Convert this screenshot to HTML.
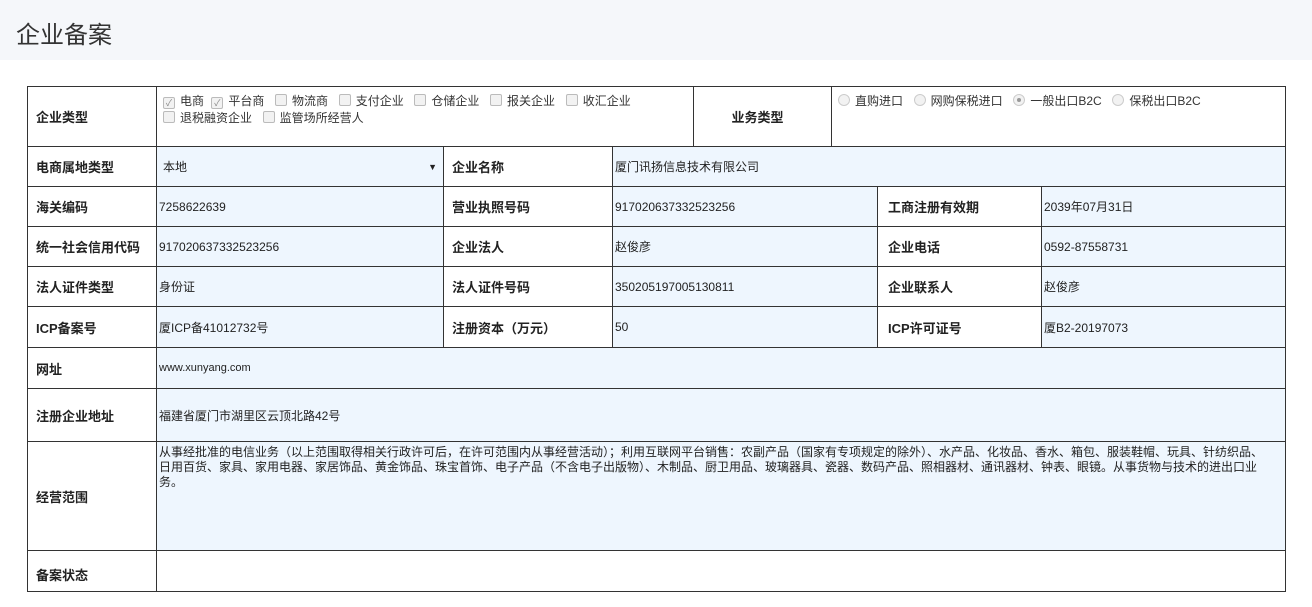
<!DOCTYPE html>
<html><head><meta charset="utf-8"><style>
body{margin:0;width:1312px;height:607px;background:#fff;position:relative;overflow:hidden;font-family:"Liberation Sans","Noto Sans CJK SC",sans-serif;color:#222}
.hd{position:absolute;left:0;top:0;width:1312px;height:60px;background:#f5f7fa}
.hd span{position:absolute;left:16px;top:15px;font-size:24px;color:#333}
.c{position:absolute;box-sizing:border-box;border:1px solid #333;display:flex;align-items:center;font-size:12px;padding-left:2px;overflow:hidden}
.l{font-weight:bold;font-size:13px;padding-left:8px;background:#fff}
.b{background:#eef6fe}
.t{align-items:flex-start}
.cb{display:inline-block;width:10px;height:10px;border:1px solid #bbb;border-radius:2px;background:#f2f2f2;vertical-align:-1px;margin:0 5px 0 4px;position:relative;font-size:9px;line-height:10px;text-align:center;color:#888}
.rd{display:inline-block;width:10px;height:10px;border:1px solid #ccc;border-radius:50%;background:#f2f2f2;vertical-align:-1px;margin:0 5px 0 4px;position:relative}
.rd.on::after{content:"";position:absolute;left:3px;top:3px;width:4px;height:4px;border-radius:50%;background:#999}
</style></head><body>
<div class="hd"><span>企业备案</span></div>

<div class="c l" style="left:27px;top:86px;width:130px;height:61px">企业类型</div>
<div class="c t" style="left:156px;top:86px;width:538px;height:61px;display:block;padding-top:6px;line-height:17px;color:#333"><span class="cb">✓</span>电商 <span class="cb">✓</span>平台商 &nbsp;<span class="cb"></span>物流商 &nbsp;<span class="cb"></span>支付企业 &nbsp;<span class="cb"></span>仓储企业 &nbsp;<span class="cb"></span>报关企业 &nbsp;<span class="cb"></span>收汇企业<br><span class="cb"></span>退税融资企业 &nbsp;<span class="cb"></span>监管场所经营人</div>
<div class="c l" style="left:693px;top:86px;width:139px;height:61px;justify-content:center;padding-left:0;padding-right:10px">业务类型</div>
<div class="c t" style="left:831px;top:86px;width:455px;height:61px;display:block;padding-top:5px;color:#333"><span class="rd"></span>直购进口 &nbsp;<span class="rd"></span>网购保税进口 &nbsp;<span class="rd on"></span>一般出口B2C &nbsp;<span class="rd"></span>保税出口B2C</div>

<div class="c l" style="left:27px;top:146px;width:130px;height:41px">电商属地类型</div>
<div class="c b" style="left:156px;top:146px;width:288px;height:41px;padding-left:6px"><span style="flex:1">本地</span><span style="font-size:9px;margin-right:6px">▼</span></div>
<div class="c l" style="left:443px;top:146px;width:170px;height:41px">企业名称</div>
<div class="c b" style="left:612px;top:146px;width:674px;height:41px">厦门讯扬信息技术有限公司</div>

<div class="c l" style="left:27px;top:186px;width:130px;height:41px">海关编码</div>
<div class="c b" style="left:156px;top:186px;width:288px;height:41px">7258622639</div>
<div class="c l" style="left:443px;top:186px;width:170px;height:41px">营业执照号码</div>
<div class="c b" style="left:612px;top:186px;width:266px;height:41px">917020637332523256</div>
<div class="c l" style="left:877px;top:186px;width:165px;height:41px;padding-left:10px">工商注册有效期</div>
<div class="c b" style="left:1041px;top:186px;width:245px;height:41px">2039年07月31日</div>

<div class="c l" style="left:27px;top:226px;width:130px;height:41px">统一社会信用代码</div>
<div class="c b" style="left:156px;top:226px;width:288px;height:41px">917020637332523256</div>
<div class="c l" style="left:443px;top:226px;width:170px;height:41px">企业法人</div>
<div class="c b" style="left:612px;top:226px;width:266px;height:41px">赵俊彦</div>
<div class="c l" style="left:877px;top:226px;width:165px;height:41px;padding-left:10px">企业电话</div>
<div class="c b" style="left:1041px;top:226px;width:245px;height:41px">0592-87558731</div>

<div class="c l" style="left:27px;top:266px;width:130px;height:41px">法人证件类型</div>
<div class="c b" style="left:156px;top:266px;width:288px;height:41px">身份证</div>
<div class="c l" style="left:443px;top:266px;width:170px;height:41px">法人证件号码</div>
<div class="c b" style="left:612px;top:266px;width:266px;height:41px">350205197005130811</div>
<div class="c l" style="left:877px;top:266px;width:165px;height:41px;padding-left:10px">企业联系人</div>
<div class="c b" style="left:1041px;top:266px;width:245px;height:41px">赵俊彦</div>

<div class="c l" style="left:27px;top:306px;width:130px;height:42px">ICP备案号</div>
<div class="c b" style="left:156px;top:306px;width:288px;height:42px">厦ICP备41012732号</div>
<div class="c l" style="left:443px;top:306px;width:170px;height:42px">注册资本（万元）</div>
<div class="c b" style="left:612px;top:306px;width:266px;height:42px">50</div>
<div class="c l" style="left:877px;top:306px;width:165px;height:42px;padding-left:10px">ICP许可证号</div>
<div class="c b" style="left:1041px;top:306px;width:245px;height:42px">厦B2-20197073</div>

<div class="c l" style="left:27px;top:347px;width:130px;height:42px">网址</div>
<div class="c b" style="left:156px;top:347px;width:1130px;height:42px;font-size:11px">www.xunyang.com</div>

<div class="c l" style="left:27px;top:388px;width:130px;height:54px">注册企业地址</div>
<div class="c b" style="left:156px;top:388px;width:1130px;height:54px">福建省厦门市湖里区云顶北路42号</div>

<div class="c l" style="left:27px;top:441px;width:130px;height:110px">经营范围</div>
<div class="c b t" style="left:156px;top:441px;width:1130px;height:110px;display:block;line-height:15px;padding-top:3px;white-space:nowrap">从事经批准的电信业务（以上范围取得相关行政许可后，在许可范围内从事经营活动）；利用互联网平台销售：农副产品（国家有专项规定的除外）、水产品、化妆品、香水、箱包、服装鞋帽、玩具、针纺织品、<br>日用百货、家具、家用电器、家居饰品、黄金饰品、珠宝首饰、电子产品（不含电子出版物）、木制品、厨卫用品、玻璃器具、瓷器、数码产品、照相器材、通讯器材、钟表、眼镜。从事货物与技术的进出口业<br>务。</div>

<div class="c l" style="left:27px;top:550px;width:130px;height:42px;padding-top:6px">备案状态</div>
<div class="c" style="left:156px;top:550px;width:1130px;height:42px"></div>
</body></html>
